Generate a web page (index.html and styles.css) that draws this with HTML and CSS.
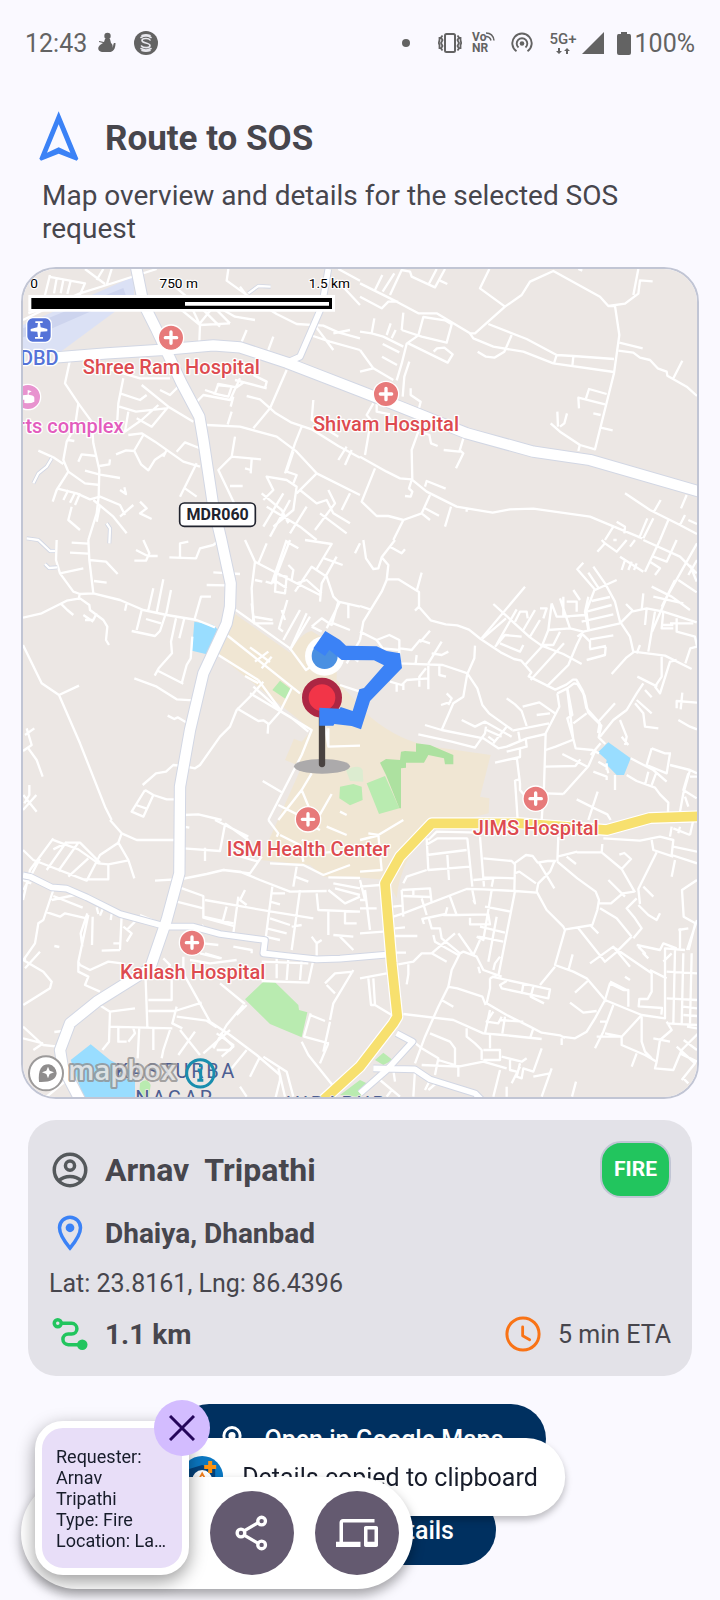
FILE: index.html
```html
<!DOCTYPE html>
<html lang="en">
<head>
<meta charset="utf-8">
<meta name="viewport" content="width=device-width, initial-scale=1">
<title>Route to SOS</title>
<link rel="stylesheet" href="styles.css">
</head>
<body>
<div class="status">
  <div class="status-left">
    <span>12:43</span>
    <svg width="18" height="22" viewBox="0 0 18 22" fill="currentColor"><circle cx="9.500" cy="4" r="3.200"/><path d="M7 7h5l1 4c2 1.500 2 4 1 5 1.500-1 1-4 2-5h1.500c0 4-1 8-5 9H4c-4-1-5-4-2-7l3-2-4-1V9l5 1z"/></svg>
    <svg class="badge-s" width="26" height="26" viewBox="0 0 26 26"><circle cx="13" cy="13" r="12" fill="currentColor"/><g fill="none" stroke="#e8e8ee" stroke-width="1.600" stroke-linecap="round"><path d="M8 7.500q5-3 10 0M9 5.500q4-1.500 8 0M17 10c-1-2-8-2-8 .5 0 3 8 2 8 5s-7 2.500-8.500.5M8 18.500q5 3 10 0M9 20.500q4 1.500 8 0"/></g></svg>
  </div>
  <div class="status-right">
    <svg class="dot" width="8" height="8" viewBox="0 0 8 8"><circle cx="4" cy="4" r="4" fill="currentColor"/></svg>
    <svg class="vibrate" width="24" height="22" viewBox="0 0 24 22" fill="none" stroke="currentColor" stroke-width="1.800"><rect x="7" y="2" width="10" height="18" rx="1.500" stroke-width="2"/><path d="M4.500 3.500l-1.500 2 1.500 2.500L3 11l1.500 3L3 16.500l1.500 2M1.500 5v3L.8 11l.7 2v4M19.500 3.500l1.500 2-1.500 2.500 1.500 3-1.500 3 1.500 2.500-1.500 2M22.500 5v3l.7 3-.7 2v4"/></svg>
    <span class="vonr"><span>Vo<svg width="9" height="9" viewBox="0 0 9 9" fill="none" stroke="currentColor" stroke-width="1.500"><path d="M0 1q7 0 8 7.500M0 4.500q4 0 5 4"/></svg></span><span>NR</span></span>
    <svg class="hotspot" width="22" height="22" viewBox="0 0 22 22" fill="none" stroke="currentColor" stroke-width="1.900"><circle cx="11" cy="11.500" r="2.300" fill="currentColor" stroke="none"/><path d="M7.500 15.500a5.300 5.300 0 1 1 7 0M5.500 19.200a9.700 9.700 0 1 1 11 0"/></svg>
    <span class="net"><span>5G+</span><svg width="14" height="6" viewBox="0 0 14 6" fill="currentColor"><path d="M2 0h2v3h2L3 6 0 3h2zM10 6h2V3h2l-3-3-3 3h2z"/></svg></span>
    <svg class="signal" width="22" height="22" viewBox="0 0 22 22"><path d="M22 0v22H0z" fill="currentColor"/></svg>
    <svg class="battery" width="14" height="23" viewBox="0 0 14 23"><path d="M4 0h6v2h2.500Q14 2 14 4v17q0 2-2 2H2q-2 0-2-2V4q0-2 1.500-2H4z" fill="currentColor"/></svg>
    <span>100%</span>
  </div>
</div>

<header class="head">
  <div class="head-row">
    <svg class="nav-icon" width="40" height="56" viewBox="0 0 120 168" fill="none"><path fill="#3b82f6" fill-rule="evenodd" d="M59 1 118 143 113 149 59 128 6 149 1 143ZM59 40 24 125 59 109 94 125Z"/></svg>
    <h1>Route to SOS</h1>
  </div>
  <p class="sub">Map overview and details for the selected SOS request</p>
</header>

<main>
<div class="map">
<svg class="map-art" viewBox="69 27 2022 2484" role="img" aria-label="Map of Dhanbad with route">
  <rect x="69" y="27" width="2022" height="2484" fill="#ece7e4"/>
  <path fill="#dbe1f5" d="M69 195 400 50 403 112 180 277 69 277Z"/>
  <path fill="#cdd4ee" d="M69 205 370 84 378 108 150 208 69 232Z"/>
  <path fill="#f0e6d3" d="M705 1062 870 1178Q900 1120 935 1113L1010 1160 1010 1260 1110 1370Q1200 1445 1300 1460L1472 1485 1440 1610 1468 1615 1466 1660 1290 1705Q1200 1800 1190 1915L1160 1860 1060 1850 970 1850 930 1815 780 1800 905 1520 855 1500 882 1436 905 1445 935 1410 655 1185Z"/>
  <g fill="#b9ebb0">
    <path d="M840 1262 876 1290 858 1318 817 1290ZM1100 1570 1155 1548 1198 1645 1137 1662ZM1020 1580 1060 1572 1085 1580 1088 1620 1050 1636 1018 1615ZM735 2218 790 2165 825 2167 895 2235 897 2250 922 2257 905 2332 810 2292ZM1125 2400 1150 2378 1178 2400 1150 2415ZM1020 2505 1080 2460 1100 2470 1080 2511ZM420 2470q20-20 32 5l-5 36h-30z"/>
  </g>
  <path fill="#dcecd0" d="M1038 1530q40-20 50 0l2 35-40-2z"/>
  <path fill="#ade1a0" d="M1140 1508 1158 1497 1200 1500 1203 1475 1215 1473 1248 1475 1248 1450 1290 1455 1360 1485 1360 1513 1335 1513 1332 1495 1285 1485 1272 1508 1218 1508 1218 1523 1203 1525 1203 1645 1198 1645 1158 1545Z"/>
  <path fill="#99ddff" d="M583 1085 640 1095 652 1108 620 1183 576 1172ZM1825 1447 1892 1495 1872 1545 1850 1545 1818 1512 1820 1500 1794 1477ZM212 2400 272 2353 330 2400 405 2440 405 2511 250 2511Z"/>

  <g class="minor">
    <path d="M69 180 150 140 240 100 320 75 470 27M130 125l20-80M145 50l110 20-20 45M170 55l-8 45M190 60l-8 40M212 62l-10 40M255 27l60 45M290 60l20-33M320 75l15-48M85 160l60-20"/>
    <path d="M495 55 560 110 600 195 690 190M520 130l80 65M600 195l-2 50M600 190l40-50 50 50M635 130l70 40 60 10M685 27l-5 35 70 50 80 50 60 30 80 5 45 20 65 18M720 80l30 40M600 140l60 60M740 210l-15 35M820 230l-15 40M930 225l60 20 90 25M940 190l60 80M1000 220l50-10M1010 60l70 75M1015 27l65 35"/>
    <path d="M210 300 195 370 235 430 275 485 280 550 298 630 296 710 290 760 265 840M280 720l60 50 40 50M370 355 355 430 352 480M320 325 420 355 510 355M425 375 505 440 580 485M480 390l30 15 25-25M360 400l60 20 20-15M358 440l50 15 90-10M385 455l-10 60 50-35 50-45M410 475l45 25 50-60M385 525 425 520 465 545 550 605 600 620M348 583l30-12 25 2 20 40 22 18 20-32 30-20M430 525l-28 48M500 570l-10 20M530 575l25-28 50 20M590 610l-50 100M555 685l35 25"/>
    <path d="M235 430 225 500 200 545 190 600 205 635 170 690 158 725M115 572l45 20 30 20M205 540l18 3M205 635l50 35 45 5M235 605l10-22 45 5M298 618l30-5 2-15M255 632l45 12 60 10M170 685l60 15 40 18 30-8 60 25 15 30M205 690l-15 30M225 698l-15 30M240 700l-15 35M360 690l18 12-5-20M420 725l20 20-20 15 35 17M300 735l-10 50M215 740l-10 40 35 30M400 735l-40 35"/>
    <path d="M585 430 610 405 690 420 720 355M615 390l30 10 10-28 55 10 22-15M640 400l45 10 10-30-45-5M700 410l-8 30M705 360l95 25M760 345l40 20-5 20M860 330 810 445 760 505M740 408l40 10 45 40 50 30 60 20 80 50 65 35M620 495 720 500 830 530 890 575 950 640 1080 705M695 455l-12 38M705 530l-10 60-40 40 50 105M695 590l88 8M755 598l-3 42M735 625l18 5M690 678l38 0M905 500l-20 50-30 90M880 575l-20 60 30 10-10 25M940 420l-5 60 80 50M1040 560l-25 40M1055 570l-20 45"/>
    <path d="M790 720 820 690 800 650 860 660 890 680 880 750 820 800M785 700l60 50 20 40M800 740l100 60 50 40M900 690l50 40 30-10 20 40 50 30M950 640l-60 60M850 700l-60 100M870 720l-60 110M920 740l-50 80M985 690l20 40-60 80M1050 700l-25 50M960 760l80 60"/>
  </g>
  <g class="minor" transform="translate(1080 0)">
    <path d="M0 70 110 125 175 160 230 160 330 220 345 220 435 140 485 105 510 65 580 33 720 110 745 138 765 138 778 225 762 340 705 568 660 555 600 515 572 490M388 27 360 85 435 140M0 110l65 35 20-20 30 0M45 90l22-45M68 95l35-55M90 105l35-75 25 5 5 15 70 32 30-55M205 75l25-48M240 62l22 10M745 138l50-7 40-30 5-40 38 3M820 105l15-78M655 27l12 5"/>
    <path d="M125 210l60 20 75 18 15-55-20-12-65-10-15 55-35 25-15 60-15 50M130 158l-5 52M0 215l35 5 35 10 60 30M35 220l8-45M80 225l12-35M95 235l12-25M68 252l50 25M66 290l45 25M145 250l118 58 15-25-25-20-22 2-10 10M0 270l40 55-40 10M40 325l60 35M148 305l-15 45-5 60M152 385l0 20 30 20-5 20"/>
    <path d="M330 220 340 235 400 260 490 275 580 310 762 336M385 192 500 237 590 285 640 288 762 297M455 225l-22 50-30 18-25-3-25-15M590 285l-8 25M640 290l-3 28M778 248l70 17M775 272 820 278 840 293 870 300 893 325 920 335 922 347 980 380 1011 408M940 355l27-53M740 402l-53-15-9 28M735 433l-80-20 2 32M700 460l22 5M722 503l36 8M655 573l5-20M594 500l-2-45M600 500l13-10 8-30"/>
    <path d="M40 430 20 465 33 480 15 585M0 590 80 635 120 655 155 658 200 695 290 740 398 758 450 748 520 746 690 770 762 800M50 430l0 25 40 8M175 515 155 570 157 660M180 515l28 10 5 25 20 8M45 625 5 725 50 768 85 768 130 780 185 760 210 705M130 780 100 840M155 660l-8 25 10 10-5 15-17-2M195 680l5-17 57 23M195 745l42 22M185 760l25 20M273 740l-18 60M310 535l-12 40-47-5M298 570l12 10-22 45M320 755l0-10"/>
    <path d="M795 700 870 750 960 795 1011 822M902 720l-20 35M980 705l-17 40M975 765l-15 30M985 780l26 12M925 780l-25 60M762 800l85 35M770 785l25 15-2 20M760 800l-25 40M862 775l-25 60M880 775l-30 60"/>
  </g>
  <g class="minor" transform="translate(0 840)">
    <path d="M170 0 168 60 180 100 220 155 240 162 280 160 360 180 430 210 500 225 590 240 645 262M265 0 268 60 280 160M69 233 125 220 200 182 240 175 268 195 270 210 310 240 322 260 318 300 327 315M182 190l20 20 18 15M240 160l-5 20M250 225l30 20M255 240l25 0 10-20M215 8l50 3M210 38l55 3M180 100l70-15M268 60l50 5 35 37M282 123l38 5M380 190l-5 22M425 210 410 270M395 273l70 15 15-15 15-45M438 237l45 13M460 145l-15 65M490 118l-20 100M513 150l-15 75M528 235l-15 70 3 35-40 45-12 22M553 235l-15 60M577 290 572 355 560 375 545 430M475 393l75 38M583 240l20-70 30 0M430 0l18 40-10 22-35 0M408 30l35 18 30 0M540 55l0-45 25-5M508 52l80 3 12-30 40-10 25-20"/>
    <path d="M640 97l80 5M620 135l60 1M403 415l67 25 60 38 50 3M503 527l20 10 10-5 30 18M69 315 125 430 177 465 237 437M177 465 240 610 315 800 335 840M80 565l15 50-26 18M85 625l25 35 18 50M75 585l28-20M88 735l0 30-15 25M70 765l40 50M69 810l40-45M428 735l40-35 30-5 22-20 30 3 35 7 15-10 60-85 30-30 20-50 50-50 30-35M710 505l65 38 15-2 15 10-2 30M805 555l35-40 35-70M435 750l-40 65 35 15 30-65 40 13 25 0M435 750l25 15M408 795l30 10M550 825l45-2 70 17"/>
    <path d="M705 208 870 325 918 390 960 360M680 285 900 460M655 345 775 420M735 408l40 22M750 322l30 22 30 22M805 335l-40 30M815 350l-30 35M775 420 845 515 870 530 925 575M760 440l80 70M750 460l185 110-30 75-100 195M970 530l15 90 95-3M985 620l0-55M935 700l-30 50-70 90M905 750l25 60M995 762l-40 70M788 723l60 35M835 795l70 35M1020 815l20 10M870 330l60-100M850 300l50-90M760 250l60 0M755 190l8 60"/>
    <path d="M735 0 765 65 890 130 960 165M765 65l-10 80 5 100M760 230l58 10M765 120l22 5M800 10l-25 60M860 0l-45 130-18-5M895 25l-35-20M870 0l-50 130M830 90l-5 65 30 5 5-50-25-5M830 125l30 20M862 180l-25 85 12 10M845 210l10 30M865 75l15 15-5 30M885 155l50-75 45 30 20 60 15 15-20 70-30-20-30 25M890 130l30-10 45 40M915 0l80 12-45 75M1010 50l-45 80-5 55M1028 75l-55-20M1015 185l65 15M1045 190l0 45M1000 250l50 20M920 220l-50 110M980 265l40-80M1080 10l-15 30M935 260l30 15"/>
    <path d="M1020 435l60 20M1040 370l40-70M1055 350l20 15"/>
  </g>
  <g class="minor" transform="translate(1080 840)">
    <path d="M10 0 18 55 40 87 55 85 65 52 105 0M65 52 85 75 80 120 65 155 10 245 0 300M90 20l35 20 10-12M80 118l35 0 62 38 0 45 35 40 45 12 35 3 35 13 35 28 60 40 40 20 22 5 30 35-8 12 80 40 33-15 20-15 10 0 20 35 10 50 40 45-5 30M185 98l-15 55M177 200l-12 12M0 198l30 10M0 275l50 25M50 300l38-15 30 15 0 30-50-5zM120 325l35 5 25-30 30 10M210 272l-30 35M118 330l0 40 130 5 75 25 20-45 2-38M205 370l0 78M245 305l-40 65M170 345l-3 25M215 340l30 5 20-10M90 425l35 10 15-15 65-5M110 430l0 25M130 430l0 20M178 440l0-30 20-25M238 375l0 30 20 5M322 400l-12 70-30 20-35 80M260 460l15 15-10 20M322 400l30 45 15 50 20 25 70 50M243 495l30-10"/>
    <path d="M175 583 275 605 345 623 375 580 378 560M195 555 245 570 370 595 415 625 440 620 500 595 557 582M305 540l40 20 30-15 80 45M440 560l-40 50M380 570l45 20M385 590l20 15M440 475l25 18 20 20 15 45M488 500l50-13 50 35M530 525l40-5M457 572l110-22M475 575l5 30M440 635l60-15-3-25M405 668l75-17 0-25M470 650l10 80 0 20 25 30M465 720l8 120M465 722l15-5M592 460 598 500 557 580 552 740 545 840M557 630l30-10 50-20M556 680l90-2 15-20M607 642l75 38M610 762l75-83 22-50M558 760l52 2M640 600l-18-150M592 460l30-15 20-15 10 2 22 35 10 50 40 40-8 35 20 20M640 550l40-30M622 445l15 80-15 10 20 70 5 20 50 5 20 10M715 545l50-55"/>
    <path d="M365 295 495 140M400 192l110 100 35 25 65 25 55 30M438 235l-70 60M470 208l-60 105M405 320l30-35 50 5M420 310l60 25 10-20M465 245l15-30 20 0 3 20M490 270l35-60M510 290l30-50M540 205l20 0-10 30M495 375l50-55 20-50 10-80M512 420l100-110M560 440l65-65 25-60 15-30M540 315l40 0 20-40M565 270l65-5 40 10 110-25M600 175l30 90M610 170l0 60 65-5M575 190l15 40 40 0M620 185l30 0 0 30M640 150l20 30M665 280l25 25 0 20M685 170l-10 45 10 55M670 68l-18 20 52 60-25 65 8 58M685 98l30 45M700 80l35 50 30 55 15 60 30 45 10 45 95 12 80 40M705 150l65-30M695 183l55-12M680 215l75-20M665 245l95-22M672 275l-20 15M690 298l70-12M688 328l50-10M680 360l55-15 2-25M755 402l45-50 20-15M780 250l35-35 45-10 50 10 100 32M850 160l-5 50M798 192l20 20M860 205l-5 50M885 215l-20 120M905 350l0 60-20 30 15 20 30-95 20-5M832 410l60 30M850 430l-20 30-30 50-40 30-40 50M855 450l20 22M825 490l25 30 5 40 40 5M830 480l45 40M780 540l20 50-5 25M785 590l20 25"/>
    <path d="M712 35 735 10 770 35 800 0M735 10l-10-10M760 0l10 0M810 20l15-20M850 0l110 50 50 50M780 50l70 45M795 60l-10 30M815 65l-10 25M830 70l-8 20M855 95l45-95M870 65l30 20-15 20M880 50l40 15 30-65M1011 10l-90 160-45 105M875 140l60 30 55 40M880 170l90 20M905 200l40-80M955 120l55 37M990 75l20 50M985 105l26-45M910 215l-5 50 35 0M950 235l0 40 55 15 6 30-20 5-15 45M905 255l35 0M930 250l70 0M830 340l10-25"/>
    <path d="M812 655 880 690 920 725M800 705l30 18 55 20 15 20 25 25-2 50M875 625l-15 50 60 25 10-60M875 625l40 15 18 0M930 675l60 15 21 10M990 690l-20 70-10 55M985 700l-15 50 40 25M990 710l21 0M890 695l-15 40M865 695l-10 40M955 540l35 20 21 8M967 458l-5 50M950 505l0-22 61 5M765 705l0 45M700 695l40 15 0 10M715 665l25 15 5 20M740 690l0-20M650 778l60 30 32 15 10 17M685 840l28-85M975 770l10 30M722 610l-30 35"/>
  </g>
  <g class="minor" transform="translate(0 1680)">
    <path d="M330 0 365 40 410 60 525 60M365 40 355 68 385 120 403 175M355 68 300 105 260 182 100 120 69 90M160 55 90 150 69 240M155 58l80 30 60 42 30 3 0 45-75 0M200 65l-60 85M235 68l-60 85M160 88l40-20 40 0 60 60M265 115l-60 55M120 115l-50 95M69 180l25 10M325 133l60-12M550 20l18 3M550 85l110 8 15-80M615 83l0 40M645 0l100 50M675 10l70 50M160 210l-30 90-15 10-10 60-35 50 60 35 25 30-5 20-80 50M160 228l88 35M135 275l45 15 15-10 65 15M155 240l70-15M262 280l-20 60 5 40M278 290l-2 85M290 262l5 20M310 262l-10 25M335 280l-3 20M350 285l15 0-5 105M340 370l20 0M370 320l25 20-15 25M405 305l-25 25M265 285l-30 140 5 10 30 15 55-25 40 5M235 425l0 30 30 15-10 25 45 20M305 392l55-2M420 285l60 25M163 378l15 3M120 395l-45 50M75 420l0-10M490 415l20 20-15 30M550 410l0 50 50 90 30 55 60 40 80 60 70 60 0 15-15 60M515 480l0 60-70 0M437 480l5 140M290 550l40 25 75-10M330 575l-3 90-20 25M327 620l190 5M445 573l80 0 80-25M530 590l90 12 30 20M530 560l-13 50 30 15M69 620l60 55 45 5M69 655l60 15M163 636l25-3M355 620l0 45 25 0M385 665l20-25-5-15M418 620l-5 95M460 625l0 65M510 630l-20 60-5 25M540 630l60 75M585 635l-50 70M690 630l-80 70M650 690l40 0 10-15-50-35M730 555l-50 60-40 70M740 690l-45 55M780 710l-30 60M660 490l75 62M740 555l-30 30M570 420l60 10 80-10M600 400l60 15M100 690l30-20M140 830l60-50"/>
    <path d="M465 182l80-5 75-15 50-12 50 5 60 25 90 35 110-2M540 203l70 25 0 65 90 25M530 245l80 20M615 240l200 35 125 20M680 260l-12 45M715 230l-15 110M735 210l-15 30 20 15M610 290l90 20M610 315l-10 10M817 200l-20 155M815 220l40 0M810 245l30 8M900 210l-25 180M810 295l60 20M800 325l60 15M795 350l45 10M875 320l30-5M785 110l-35 50-80-10M690 100l85 25M810 130l100 5 60 30 80-30M890 140l-10 60M885 170l40 15M985 172l95 2M1000 190l80 15M1005 205l75 20M985 210l50 40 45-20M950 220l5 50 125 5M985 275l0 70M1035 275l0 35 35 0M1020 350l40 40M1000 345l60 5M935 350l15 20 0 40M950 370l15-10M700 380l55 10 0 10M610 370l45 5M615 400l50 15M830 415l0 60M865 415l-5 65M905 420l-5 60M785 425l140 5M940 420l-15 68-140-5M930 585l45 18M932 580l-20 70 75 20M905 665l20 40 80 100M985 670l-25 60M990 605l-20 90M990 600l10-50 60-100M975 490l30-30 55-5M980 495l25 25M835 745l20 85M790 710l70 45 20 75M720 800l20 30M660 640l40 40-35 30"/>
    <path d="M805 0l30 40-5 10M900 0l60 30M840 45l60 30 10 50M905 60l30 10M1060 90l-110 10M980 20l60 25"/>
  </g>
  <g class="minor" transform="translate(1080 1680)">
    <path d="M55 45 65 150 0 155M55 45 130 0M0 60l60-15M55 45l-30-5M200 55l5 95 125-10M200 105l120-15M262 105l5 75M322 55l15 145M198 75l35-20 90 0M205 60l25-25 130 3M360 50l12 150M370 115l85 8 10 10-2 80M370 172l95 3M340 180l60-5-5 25M463 130l35-25 20 3 15 20 30-5 25 0M463 160l15-5 50 35M538 130l45 75M585 120l-15 35-35 35-5 25M595 50l-3 75M650 97l75 0 2-25M592 110l60-15M620 110l28 22M592 125l60 50 55 40 10 25-5 30-15 45-80 13M725 97l60 50 40 70M785 147l28-30-20-18-15 5M745 180l50 50M890 97l-55 110 5 45M850 200l30 30M718 250l35 0 35-30 35-5M720 265l50 30 45 55M830 235l-30 30 25 30 20 30-25 30M835 255l30 30 25 15 10-20M530 215l30 55 50 50 5 10-30 105 55 20 40 20 60 70M655 325 735 425 765 400 815 350M690 315l25 25M690 430l70-50 50 60M585 440l-45 55M638 403l-12 45M765 385l110 75 0 55-12 22-25 0-2 22 70 5-2 20"/>
    <path d="M100 290 130 280 320 207 370 208 465 213 530 218M270 230l20 55-40 0M130 190l10-20 60-20M125 210l5 80M125 210l85-5 5 45M130 228l80 3M160 205l0 20M185 235l15 50M100 260l25-3M290 285l95-2 5 30-60 0 0-20M375 260l78 15M395 210l-25 150-20-10M410 290l-25 135M465 213l-50 255M360 320l75 18M355 350l75 15M360 360l-20 45-45-65M340 240l5 10-8-40M420 410l-15 20-5 20M262 262l-5 20-70 15 5 15M205 290l10 35 25 0 5 30 55 45 10-5 40 15 20 40 55 20M285 340l-70 60-30 0-25 25-45 8M220 345l5 20 70 40M215 400l45 25M105 325l30-3M105 348l67 0M105 398l33 0M145 433l0 30-5 30M0 340l70-5M0 265l50 0M15 210l15 120M0 240l20 0M0 180l15 60M0 200l60-5M355 440l5 20M300 400l-25 50-10 50-30 60-40 90-30 80M262 500l30 5 75 25 10 25M390 475l0 30-10 45M390 475l20-10M395 470l175 38-5 27-140-30-5-10 20-12M490 492l-5 30M520 500l-8 30 40 20M245 540l35 20M130 582l150 18 90 40 60 5 115 12M380 550l60 35 70 35 35 18 55 8 15 8M390 570l-15 70M400 575l-20 30 35 5 10-20M435 590l-8 50M420 600l70 5M520 625l-10 30M605 655l0 20M605 650l40 5 35-20 25-40 30-55M630 548l40 30 40-5M645 518l38-35M735 540l15-50 40 20 15 0 0 50M750 485l50 25M795 470l15 10"/>
    <path d="M210 640l60 25 15 20 0 50M155 660l30 25 50 30-10 50M320 625l0 25 25 20 20 20 0 30M390 645l0 40M370 690l50 0 0 30-50 0M185 735l110 5 75-15 70 20M295 735l0 35M235 720l65 20M420 750l-20 80M425 710l60 15 15-10M450 720l0 30 20 5M480 730l-10 40 15 5 5-30 30 10 25-70M440 800l0 30M455 790l25-50M520 770l50-10M575 745l-30 85M648 785l-12 45M165 750l-5 80M240 780l-35 30M215 770l-20 40M100 750l5 35M60 780l60 50M95 810l-15 20M0 475l80-15M25 475l8 80 12 0-5-80M45 555l50 30"/>
    <path d="M735 540l110 45 70 10 0-210 60 5M760 555l-30 80-25 50M720 605l20 0M710 650l75 0 60-65M785 650l0 25 70 30 35 20-5 20 55 5 25-60 50-50M845 590l0 75 10 30 20 20M830 700l-15 40M920 605l15 25-35 30-10 65M880 655l50 10M950 680l55 50-40 50M985 790l-15-15M1011 625l-30-5M960 700l51 25M1011 690l-40-30M920 455l91 5M945 390l-5 220M970 400l-5 215M995 400l-5 210M920 535l91 5M920 610l91 5M970 560l41 5M970 585l41 3M830 375l70 15 10-20 40 15M835 380l20 20-5 0 15 15M910 425l25-25M1011 180l-45 30 5 80 35 20-20 80M960 325l0 60M1011 300l-30 90M955 330l30-5M730 55 840 62 900 50 940 60 935 105 1011 130M930 50l5-30M875 60l5 30 60 20M945 120l-10 50M1000 0l-10 45M960 20l-5 20M940 25l50 20M940 80l71 15M870 450l50 25M735 640l50 10"/>
  </g>

  <g class="road-edge">
    <path class="w-sec" d="M985 27 965 140 900 290 860 308M69 1846 90 1850 155 1882 200 1886 260 1912 360 1962 500 2000 580 2000 660 2022 795 2040 790 2080 860 2088 950 2098 1020 2096 1160 2084M1190 2320 1238 2345 1160 2430 1080 2500M1120 2425 1245 2428 1290 2458 1425 2500 1445 2520"/>
    <path class="w-thin" d="M155 595 140 620 115 640 100 670M320 790l10 15-2 45M80 835l35 5 35 33 15 0M135 912l12 12 25-2M745 100 775 78 812 80"/>
    <path class="w-main" d="M408 20 430 130 470 210 505 285 545 370 598 470 610 540 640 740 664 840 692 970 690 1040 680 1090 610 1240 570 1410 540 1580 538 1840 500 1980 450 2125 290 2225 210 2290 180 2370 188 2420 240 2520M170 292 320 280 480 270 640 256 720 262 860 308 1080 393 1200 440 1400 520 1600 575 1770 600 2100 695"/>
  </g>
  <g class="road-fill">
    <path class="w-sec" d="M985 27 965 140 900 290 860 308M69 1846 90 1850 155 1882 200 1886 260 1912 360 1962 500 2000 580 2000 660 2022 795 2040 790 2080 860 2088 950 2098 1020 2096 1160 2084M1190 2320 1238 2345 1160 2430 1080 2500M1120 2425 1245 2428 1290 2458 1425 2500 1445 2520"/>
    <path class="w-thin" d="M155 595 140 620 115 640 100 670M320 790l10 15-2 45M80 835l35 5 35 33 15 0M135 912l12 12 25-2M745 100 775 78 812 80"/>
    <path class="w-main" d="M408 20 430 130 470 210 505 285 545 370 598 470 610 540 640 740 664 840 692 970 690 1040 680 1090 610 1240 570 1410 540 1580 538 1840 500 1980 450 2125 290 2225 210 2290 180 2370 188 2420 240 2520M170 292 320 280 480 270 640 256 720 262 860 308 1080 393 1200 440 1400 520 1600 575 1770 600 2100 695"/>
  </g>
  <path class="hwy-edge" d="M2100 1669 1950 1674 1820 1710 1690 1700 1560 1690 1295 1690 1200 1790 1155 1870 1175 2110 1192 2270 1180 2290 1080 2420 970 2520"/>
  <path class="hwy" d="M2100 1669 1950 1674 1820 1710 1690 1700 1560 1690 1295 1690 1200 1790 1155 1870 1175 2110 1192 2270 1180 2290 1080 2420 970 2520"/>

  <g class="place">
    <text x="529" y="2455">KASTURBA</text>
    <text x="525" y="2534">NAGAR</text>
    <text x="1010" y="2552">HIRAPUR</text>
  </g>
  <g class="poi">
    <text x="514" y="342">Shree Ram Hospital</text>
    <text x="1158" y="512">Shivam Hospital</text>
    <text x="925" y="1788">ISM Health Center</text>
    <text x="1607" y="1724">JIMS Hospital</text>
    <text x="578" y="2157">Kailash Hospital</text>
    <text class="airport" x="176" y="316">DBD</text>
    <text class="sports" x="371" y="520">rts complex</text>
  </g>
  <defs><g id="h"><circle r="38" fill="#e77a7a" stroke="#fff" stroke-width="4"/><path d="M-17 0H17M0-17V17" stroke="#fff" stroke-width="10" stroke-linecap="round"/></g></defs>
  <use href="#h" x="513" y="233"/><use href="#h" x="1158" y="402"/><use href="#h" x="924" y="1678"/><use href="#h" x="1607" y="1616"/><use href="#h" x="576" y="2048"/>
  <rect x="80" y="173" width="74" height="74" rx="18" fill="#5573d8" stroke="#fff" stroke-width="4"/>
  <path fill="#fff" d="M106 184h22v5h-8l2 13 20 5v7l-20 1-2 16h9v5h-24v-5h9l-2-16-20-1v-7l20-5 2-13h-8z"/>
  <circle cx="84" cy="411" r="38" fill="#e893cf" stroke="#fff" stroke-width="4"/>
  <path fill="#fff" d="M83 390l12 4-9 5v5q17 2 17 9v12q-10 6-30 4v-10h-8v10l-4-2v-16q3-6 22-7z"/>
  <rect x="539" y="729" width="227" height="70" rx="14" fill="#fff" stroke="#20232e" stroke-width="5"/>
  <text class="shield" x="653" y="781">MDR060</text>

  <circle cx="974" cy="1188" r="59" fill="#fff"/><circle cx="974" cy="1188" r="39" fill="#4a90e2"/>
  <ellipse cx="966" cy="1519" rx="84" ry="22" fill="#acaaab"/>
  <path d="M966 1370V1512" stroke="#4a4341" stroke-width="19" stroke-linecap="round"/>
  <circle cx="966" cy="1313" r="50" fill="#f23548" stroke="#ac2643" stroke-width="20"/>
  <path fill="#3b82f6" d="M976 1113 1020 1140 1038 1157 1130 1159 1160 1173 1200 1180 1206 1224 1110 1323 1083 1408 1055 1398 1003 1392 1000 1397 958 1397 958 1343 1019 1346 1022 1341 1058 1353 1078 1288 1092 1284 1152 1216 1122 1201 1025 1200 988 1170 975 1188 940 1165Z"/>

  <path fill="#fff" d="M85 105H1005V155H85z"/><path d="M94 114H996V147H94z"/><path fill="#fff" d="M555 126H987V137H555z"/>
  <g class="scale"><text x="102" y="84">0</text><text x="536" y="84">750 m</text><text x="988" y="84">1.5 km</text></g>

  <circle cx="138" cy="2440" r="51" fill="#fff" stroke="#9c9a9a" stroke-width="6"/>
  <path fill="#8f8d8d" d="M117 2466Q112 2412 147 2413A28 28 0 0 1 170 2440Q168 2468 117 2466Z"/><path fill="#fff" d="M144 2420l5 12 13 5-13 5-5 13-5-13-13-5 13-5z"/>
  <text class="brand" x="205" y="2461">mapbox</text>
  <circle cx="601" cy="2440" r="41" fill="none" stroke="#198eae" stroke-width="9"/>
  <path fill="none" stroke="#198eae" stroke-width="9" d="M593 2430h9v32M592 2461h18M597 2417h10"/>
</svg>
</div>

<section class="card">
  <div class="row">
    <svg width="42" height="42" viewBox="0 0 24 24" fill="none" stroke="#55595c" stroke-width="2"><circle cx="12" cy="12" r="9"/><circle cx="12" cy="9.500" r="2.600"/><path d="M5.500 18.200C9 14.900 15 14.900 18.500 18.200"/></svg>
    <h2 class="name">Arnav&nbsp; Tripathi</h2>
    <span class="tag">FIRE</span>
  </div>
  <div class="row place-row">
    <svg width="42" height="42" viewBox="0 0 24 24"><path fill="none" stroke="#3b82f6" stroke-width="2" d="M12 20.600C7.800 15.600 6 12.200 6 9a6 6 0 0 1 12 0C18 12.200 16.200 15.600 12 20.600Z"/><circle cx="12" cy="9" r="2.500" fill="#3b82f6"/></svg>
    <strong>Dhaiya, Dhanbad</strong>
  </div>
  <p class="coords">Lat: 23.8161, Lng: 86.4396</p>
  <div class="row">
    <svg width="42" height="42" viewBox="0 0 24 24" fill="none" stroke="#22c55e" stroke-width="2"><circle cx="5" cy="5.900" r="2"/><path d="M7 5.900h5.900a3.050 3.050 0 0 1 0 6.100H11a3.050 3.050 0 0 0 0 6.100h8"/><circle cx="19" cy="18.100" r="3" fill="#22c55e" stroke="none"/></svg>
    <strong>1.1 km</strong>
    <span class="eta"><svg width="42" height="42" viewBox="0 0 24 24" fill="none" stroke="#f97316"><circle cx="12" cy="12" r="9.200" stroke-width="1.700"/><path stroke-width="1.600" stroke-linecap="round" stroke-linejoin="round" d="M11.800 8v5l4 2.300"/></svg>5 min ETA</span>
  </div>
</section>

<div class="actions">
  <button class="btn" type="button"><svg width="32" height="32" viewBox="0 0 24 24"><path fill="none" stroke="#fff" stroke-width="2.200" d="M12 22C8 17 5.900 13.400 5.900 9.500a6.100 6.100 0 0 1 12.200 0C18.100 13.400 16 17 12 22Z"/><circle cx="12" cy="9.500" r="2.700" fill="#fff"/></svg>Open in Google Maps</button>
  <button class="btn" type="button"><svg width="32" height="32" viewBox="0 0 24 24" fill="none" stroke="#fff" stroke-width="2"><path d="M4 17V3h12"/><rect x="8" y="7" width="12" height="14" rx="1"/></svg>Copy Details</button>
</div>
</main>

<div class="toast" role="status">
  <svg width="42" height="42" viewBox="0 0 42 42"><circle cx="21" cy="21" r="21" fill="#0b78c2"/><path fill="#04427c" d="M21 9l13 4v12q0 9-13 14Q8 34 8 25V13z"/><circle cx="21" cy="24" r="10" fill="#fff"/><path fill="#f4811f" d="M21 15.500l7 13H14z"/><path stroke="#fff" stroke-width="1.500" d="M21 20v5"/><path fill="#ff930f" d="M27 5h4v4h4v4h-4v4h-4v-4h-4V9h4z"/></svg>
  <span>Details copied to clipboard</span>
</div>

<div class="clip">
  <div class="clip-preview">Requester:<br>Arnav<br>Tripathi<br>Type: Fire<br>Location: La…
    <button class="clip-close" type="button" aria-label="Dismiss"><svg width="26" height="26" viewBox="0 0 26 26" stroke="#25065a" stroke-width="3"><path d="M1 1 25 25M25 1 1 25"/></svg></button>
  </div>
  <button class="clip-btn" type="button" aria-label="Share"><svg width="42" height="42" viewBox="0 0 24 24" fill="none" stroke="#fff" stroke-width="1.900"><path d="M7.500 10.800 15.800 5.900M7.500 13.200 15.800 18.100"/><circle cx="5.700" cy="12" r="2.200"/><circle cx="17.500" cy="5.200" r="2.200"/><circle cx="17.500" cy="18.800" r="2.200"/></svg></button>
  <button class="clip-btn" type="button" aria-label="Send to nearby device"><svg width="42" height="42" viewBox="0 0 24 24" fill="#fff"><path d="M4 6h18V4H4c-1.100 0-2 .9-2 2v11H0v3h14v-3H4V6zm19 2h-6c-.55 0-1 .45-1 1v10c0 .55.45 1 1 1h6c.55 0 1-.45 1-1V9c0-.55-.45-1-1-1zm-1 9h-4v-7h4v7z"/></svg></button>
</div>
</body>
</html>
```

FILE: styles.css
```css
* { box-sizing: border-box; }

body {
  margin: 0;
  min-height: 100vh;
  background: #faf9ff;
  color: #47464d;
  font-family: Roboto, "Noto Sans", sans-serif;
  font-size: 25px;
  position: relative;
}

h1, h2, p { margin: 0; }
svg { display: block; flex: none; }
button { font: inherit; border: 0; padding: 0; cursor: pointer; }

/* status bar */
.status {
  display: flex;
  justify-content: space-between;
  align-items: center;
  height: 86px;
  padding: 0 25px;
  color: #636363;
}
.status-left, .status-right { display: flex; align-items: center; }
.status-left svg { margin-left: 11px; }
.status-left .badge-s { margin-left: 17px; }
.dot { margin-right: 28px; }
.vibrate { margin-right: 10px; }
.hotspot { margin: 0 16px; }
.vonr, .net {
  display: flex;
  flex-direction: column;
  font-weight: 700;
  font-size: 12px;
  line-height: 11px;
}
.vonr > span { display: flex; }
.net { align-items: center; font-size: 15px; line-height: 15px; gap: 1px; font-weight: 500; }
.signal { margin: 0 13px 0 5px; }
.battery { margin-right: 4px; }

/* heading */
.head { padding: 22px 42px 22px 39px; }
.head-row { display: flex; align-items: center; gap: 26px; height: 62px; }
h1 { font-size: 35px; line-height: 40px; font-weight: 700; }
.sub { font-size: 28px; line-height: 33px; padding: 9px 0 0 3px; }

/* map */
.map {
  margin: 0 21px;
  border: 2px solid #c1c5d4;
  border-radius: 35px;
  overflow: hidden;
}
.map-art { width: 100%; height: auto; }
.minor { fill: none; stroke: #fff; stroke-width: 7; stroke-linejoin: round; }
.road-edge { fill: none; stroke: #d2d7e4; stroke-linejoin: round; }
.road-edge .w-main { stroke-width: 37; }
.road-edge .w-sec { stroke-width: 23; }
.road-edge .w-thin { stroke-width: 12; }
.road-fill { fill: none; stroke: #fff; stroke-linejoin: round; }
.road-fill .w-main { stroke-width: 31; }
.road-fill .w-sec { stroke-width: 17; }
.road-fill .w-thin { stroke-width: 7; }
.hwy-edge { fill: none; stroke: #fff; stroke-width: 36; stroke-linejoin: round; }
.hwy { fill: none; stroke: #f7e06e; stroke-width: 29; stroke-linejoin: round; }
.map-art text { text-anchor: middle; paint-order: stroke; stroke-linejoin: round; }
.poi { font-size: 60px; font-weight: 500; fill: #dd4b50; stroke: #fff; stroke-width: 8; }
.map-art .airport { fill: #5573d8; text-anchor: end; }
.map-art .sports { fill: #e35cbd; text-anchor: end; }
.place { font-size: 60px; letter-spacing: 8px; fill: #4d5e92; stroke: #ece7e4; stroke-width: 5; }
.shield { font-size: 48px; font-weight: 700; fill: #20232e; }
.scale { font-size: 41px; fill: #000; stroke: #fff; stroke-width: 7; }
.map-art .brand {
  font-family: "Open Sans", sans-serif;
  font-size: 82px;
  font-weight: 600;
  fill: #fff;
  fill-opacity: .7;
  stroke: #918f8f;
  stroke-opacity: .8;
  stroke-width: 12;
  text-anchor: start;
}

/* request card */
.card {
  margin: 21px 28px 0;
  padding: 21px;
  background: #e3e2e8;
  border-radius: 28px;
}
.row { display: flex; align-items: center; gap: 14px; }
.row strong { font-size: 28px; line-height: 33px; font-weight: 700; }
.name { font-size: 32px; line-height: 40px; font-weight: 700; }
.tag {
  margin-left: auto;
  padding: 0 12px;
  height: 57px;
  line-height: 53px;
  border: 2px solid #c1c5d4;
  border-radius: 21px;
  background: #22c55e;
  color: #fff;
  font-size: 21px;
  font-weight: 700;
}
.place-row { margin-top: 14px; }
.coords { line-height: 35px; margin: 12px 0; }
.eta { margin-left: auto; display: flex; align-items: center; gap: 14px; }

/* actions */
.actions {
  display: flex;
  flex-direction: column;
  align-items: center;
  gap: 21px;
  padding: 28px 28px 0;
}
.btn {
  display: flex;
  align-items: center;
  gap: 16px;
  height: 70px;
  padding: 0 42px;
  border-radius: 35px;
  background: #003060;
  color: #fff;
  font-weight: 500;
}

/* toast */
.toast {
  position: fixed;
  bottom: 84px;
  left: 50%;
  transform: translateX(-50%);
  display: flex;
  align-items: center;
  gap: 19px;
  height: 78px;
  padding: 0 27px 0 26px;
  border-radius: 39px;
  background: #fff;
  color: #171c2a;
  white-space: nowrap;
  box-shadow: 0 4px 7px rgba(0, 0, 0, .25);
}

/* clipboard overlay */
.clip {
  position: fixed;
  left: 21px;
  bottom: 11px;
  display: flex;
  align-items: center;
  gap: 21px;
  height: 112px;
  padding: 0 14px;
  border-radius: 56px;
  background: #fff;
  box-shadow: 0 6px 12px rgba(0, 0, 0, .35);
}
.clip-preview {
  position: relative;
  align-self: flex-end;
  width: 154px;
  height: 154px;
  margin-bottom: 14px;
  padding: 18px 0 0 14px;
  border: 7px solid #fff;
  border-radius: 28px;
  background: #e8def8;
  color: #171c2a;
  font-size: 18px;
  line-height: 21px;
  font-weight: 400;
  white-space: nowrap;
  box-shadow: 0 6px 18px rgba(0, 0, 0, .4);
}
.clip-close {
  position: absolute;
  top: -28px;
  right: -28px;
  display: grid;
  place-items: center;
  width: 56px;
  height: 56px;
  border-radius: 50%;
  background: #d3bcff;
}
.clip-btn {
  display: grid;
  place-items: center;
  width: 84px;
  height: 84px;
  border-radius: 50%;
  background: #645a70;
}
```
